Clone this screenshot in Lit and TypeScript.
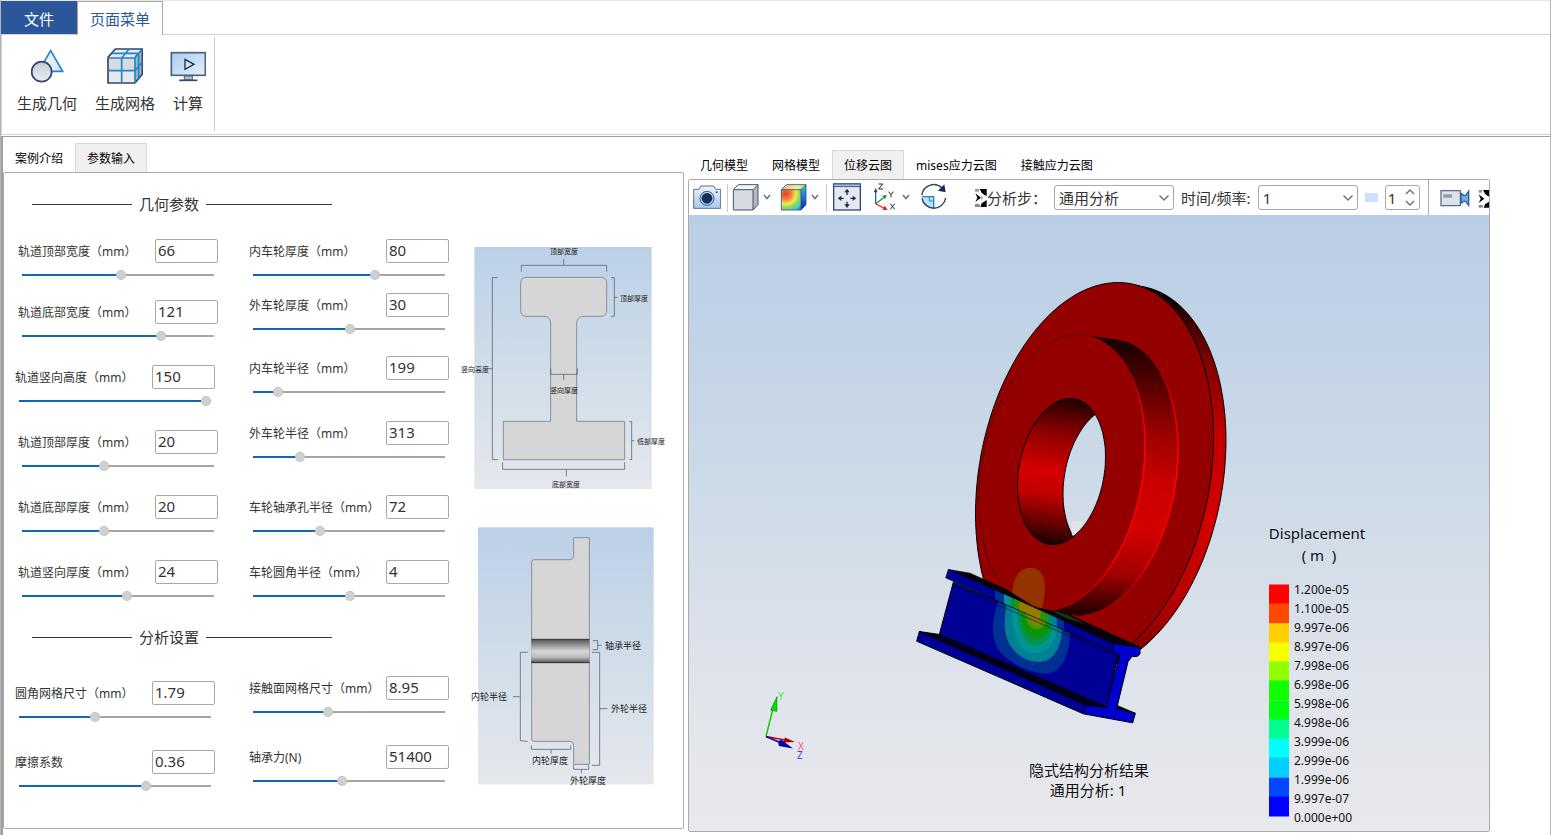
import { LitElement, html, svg, css } from "lit";
import { customElement, property, state } from "lit/decorators.js";
import { classMap } from "lit/directives/class-map.js";

interface Param {
  id: string;
  label: string;
  value: string;
  pos: number;
  outdent?: boolean;
}

const RAIL: Param[] = [
  { id: "rail-top-w", label: "轨道顶部宽度（mm）", value: "66", pos: 51.6 },
  { id: "rail-bottom-w", label: "轨道底部宽度（mm）", value: "121", pos: 73.6 },
  { id: "rail-height", label: "轨道竖向高度（mm）", value: "150", pos: 100, outdent: true },
  { id: "rail-top-t", label: "轨道顶部厚度（mm）", value: "20", pos: 42.3 },
  { id: "rail-bottom-t", label: "轨道底部厚度（mm）", value: "20", pos: 42.3 },
  { id: "rail-web-t", label: "轨道竖向厚度（mm）", value: "24", pos: 55 },
];
const WHEEL: Param[] = [
  { id: "inner-t", label: "内车轮厚度（mm）", value: "80", pos: 64.3 },
  { id: "outer-t", label: "外车轮厚度（mm）", value: "30", pos: 50.5 },
  { id: "inner-r", label: "内车轮半径（mm）", value: "199", pos: 11 },
  { id: "outer-r", label: "外车轮半径（mm）", value: "313", pos: 23.1 },
  { id: "bore-r", label: "车轮轴承孔半径（mm）", value: "72", pos: 34 },
  { id: "fillet-r", label: "车轮圆角半径（mm）", value: "4", pos: 50.5 },
];
const MESH: Param[] = [
  { id: "fillet-mesh", label: "圆角网格尺寸（mm）", value: "1.79", pos: 39, outdent: true },
  { id: "friction", label: "摩擦系数", value: "0.36", pos: 67, outdent: true },
];
const LOAD: Param[] = [
  { id: "contact-mesh", label: "接触面网格尺寸（mm）", value: "8.95", pos: 38.5 },
  { id: "bearing-force", label: "轴承力(N)", value: "51400", pos: 46.2 },
];

const LEGEND_COLORS = [
  "#ff0000", "#ff4800", "#ffd000", "#f8ff00", "#90ff00", "#12ff00",
  "#00ff12", "#00ff90", "#00ffff", "#00d0ff", "#0048ff", "#0000ff",
];
const LEGEND_LABELS = [
  "1.200e-05", "1.100e-05", "9.997e-06", "8.997e-06", "7.998e-06", "6.998e-06", "5.998e-06",
  "4.998e-06", "3.999e-06", "2.999e-06", "1.999e-06", "9.997e-07", "0.000e+00",
];

const fontStack = css`"Noto Sans", "Noto Sans CJK SC", sans-serif`;

/* Outline of a circle seen in the wheel's projection, from angle `from` to `to` in degrees. */
function ring(cx: number, cy: number, a: number, b: number, from = 0, to = 360): string {
  const skew = -0.1975;
  const depth = Math.sqrt(1 - skew * skew);
  const points: string[] = [];
  for (let d = from; d <= to; d += 3) {
    const t = (d * Math.PI) / 180;
    const x = cx + a * Math.cos(t);
    const y = cy + b * (skew * Math.cos(t) + depth * Math.sin(t));
    points.push(`${x.toFixed(1)} ${y.toFixed(1)}`);
  }
  return `M${points.join("L")}${to - from === 360 ? "Z" : ""}`;
}

/* Label, number box and slider of one parameter. */
@customElement("param-field")
export class ParamField extends LitElement {
  @property({ attribute: false }) param!: Param;
  @state() private pos: number | null = null;

  static styles = css`
    :host { display: block; }
    .field {
      display: grid;
      grid-template-columns: 137px 63px;
      grid-template-rows: 24px 12px;
      row-gap: 6px;
      align-items: center;
      font-family: ${fontStack};
      color: #333;
    }
    .label { padding-top: 2px; font-size: 12px; line-height: 22px; white-space: nowrap; }
    .box {
      box-sizing: border-box;
      width: 63px;
      height: 24px;
      padding: 0 2px 2px;
      border: 1px solid #a8a8a8;
      border-radius: 2px;
      background: #fff;
      font: 15px/20px ${fontStack};
      color: #333;
    }
    .slider {
      grid-column: 1 / -1;
      width: 192px;
      height: 12px;
      margin: 0 4px;
      appearance: none;
      background: transparent;
    }
    .slider::-webkit-slider-runnable-track {
      height: 2px;
      background: linear-gradient(to right, #0f67b7 var(--fill), #a6a6a6 var(--fill));
    }
    .slider::-webkit-slider-thumb {
      appearance: none;
      width: 10px;
      height: 10px;
      margin-top: -4px;
      border-radius: 50%;
      border: 1px dotted #b4b4b4;
      box-sizing: border-box;
      background: #d0d0d0;
    }
  `;

  render() {
    const p = this.param;
    const pos = this.pos ?? p.pos;
    return html`<div class="field">
      <label class="label" for=${p.id}>${p.label}</label>
      <input class="box" id=${p.id} type="text" .value=${p.value} />
      <input class="slider" type="range" min="0" max="100" step="any" aria-label=${p.label}
        style="--fill:${pos}%" .value=${String(pos)}
        @input=${(e: Event) => (this.pos = Number((e.target as HTMLInputElement).value))} />
    </div>`;
  }
}

/* Dimension sketches of rail and wheel sections. */
@customElement("section-sketches")
export class SectionSketches extends LitElement {
  static styles = css`
    :host { display: flex; flex-direction: column; gap: 15px; }
    .sketch { display: block; font-family: "Noto Sans CJK SC", sans-serif; fill: #222; overflow: visible; }
    .small { font-size: 7px; text-anchor: middle; }
    .large { font-size: 9px; text-anchor: middle; }
    .dim { fill: none; stroke: #5b6670; stroke-width: 2.4; }
    .body { fill: #d6d6d6; stroke: #8a9097; stroke-width: 3; }
  `;

  render() {
    return html`
      <svg class="sketch" width="220" height="265" viewBox="0 0 220 265" role="img" aria-label="轨道截面">
        <defs><linearGradient id="g" x1="0" y1="0" x2="0" y2="1">
          <stop offset="0" stop-color="#bbd0e7" /><stop offset=".5" stop-color="#d0dde9" /><stop offset="1" stop-color="#e5e7ed" />
        </linearGradient></defs>
        <g transform="scale(.33333)">
          <rect x="58" y="36" width="532" height="726" fill="url(#g)" />
          <path class="body" d="M213 127H439Q455 129 455 145V226Q455 242 439 244H384Q366 246 365 264V559H509V674H145V559H287V264Q286 246 270 244H213Q197 242 197 226V145Q197 129 213 127Z" />
          <path class="dim" d="M199 110V91H455V110M326 91V72M468 128H478V244H468M478 187H488M128 128H112V674H128M112 401H100M287 400V418H367V400M326 418V436M523 560H530V674H523M530 617H537M143 682V703H509V682M334 703V724" />
        </g>
        <text class="small" x="109" y="19">顶部宽度</text>
        <text class="small" x="179" y="66">顶部厚度</text>
        <text class="small" x="20" y="137">竖向高度</text>
        <text class="small" x="109" y="158">竖向厚度</text>
        <text class="small" x="196" y="209">低部厚度</text>
        <text class="small" x="111" y="252">底部宽度</text>
      </svg>
      <svg class="sketch" width="220" height="275" viewBox="0 0 220 275" role="img" aria-label="车轮截面">
        <defs>
          <linearGradient id="h" x1="0" y1="0" x2="0" y2="1">
            <stop offset="0" stop-color="#bbd0e7" /><stop offset=".5" stop-color="#d0dde9" /><stop offset="1" stop-color="#e5e7ed" />
          </linearGradient>
          <linearGradient id="b" x1="0" y1="0" x2="0" y2="1">
            <stop offset="0" stop-color="#555" /><stop offset=".5" stop-color="#d6d6d6" /><stop offset=".75" stop-color="#bdbdbd" /><stop offset="1" stop-color="#4c4c4c" />
          </linearGradient>
        </defs>
        <g transform="scale(.33333)">
          <rect x="69" y="37" width="527" height="771" fill="url(#h)" />
          <path class="body" d="M356 68H403V748H356V690Q355 680 345 679H236Q230 679 230 673V141Q230 134 238 134H345Q355 133 356 124Z" />
          <rect x="229" y="373" width="174" height="71" fill="url(#b)" />
          <path d="M229 373H403M229 443H403" stroke="#333" stroke-width="3" />
          <path class="dim" d="M413 377H428V404H413M428 391H440M411 412H434V751H411M434 581H457M218 412H196V677L218 679M196 545H174M229 691V703H347V691M288 703V716M356 750V763H401V750M379 763V775" />
        </g>
        <text class="large" x="168" y="134">轴承半径</text>
        <text class="large" x="174" y="197">外轮半径</text>
        <text class="large" x="34" y="185">内轮半径</text>
        <text class="large" x="95" y="249">内轮厚度</text>
        <text class="large" x="133" y="269">外轮厚度</text>
      </svg>`;
  }
}

/* Displacement contour plot of the wheel on the rail. */
@customElement("result-scene")
export class ResultScene extends LitElement {
  static styles = css`
    :host {
      display: grid;
      min-height: 0;
      background: linear-gradient(#b9cde5, #d0dce8 50%, #dfe3eb 75%, #e8e9ec);
    }
    .scene { display: block; width: 100%; height: 100%; min-height: 0; font-family: ${fontStack}; fill: #111; }
    .caption { font-size: 15px; text-anchor: middle; }
    .tick { font-size: 12px; }
    .axis { font-size: 10px; }
    .edge { stroke: #000; stroke-width: 1; }
  `;

  render() {
    return html`<svg class="scene" viewBox="689 215 800 615" role="img" aria-label="位移云图">
      <defs>
        <linearGradient id="sky" gradientUnits="userSpaceOnUse" x1="0" y1="215" x2="0" y2="830">
          <stop offset="0" stop-color="#b9cde5" /><stop offset=".5" stop-color="#d0dce8" /><stop offset=".75" stop-color="#dfe3eb" /><stop offset="1" stop-color="#e8e9ec" />
        </linearGradient>
        <linearGradient id="rim" gradientUnits="userSpaceOnUse" x1="0" y1="284" x2="0" y2="660">
          <stop offset="0" stop-color="#000" /><stop offset=".06" stop-color="#200000" /><stop offset=".2" stop-color="#800000" /><stop offset=".4" stop-color="#c00000" /><stop offset=".62" stop-color="#d40000" /><stop offset=".85" stop-color="#b80000" /><stop offset="1" stop-color="#700000" />
        </linearGradient>
        <linearGradient id="hub" gradientUnits="userSpaceOnUse" x1="1110" y1="336" x2="1090" y2="614">
          <stop offset="0" stop-color="#100000" /><stop offset=".1" stop-color="#3c0000" /><stop offset=".3" stop-color="#900000" /><stop offset=".5" stop-color="#c80000" /><stop offset=".68" stop-color="#d40000" /><stop offset=".85" stop-color="#a00000" /><stop offset="1" stop-color="#200000" />
        </linearGradient>
        <linearGradient id="lit" gradientUnits="userSpaceOnUse" x1="0" y1="345" x2="0" y2="614">
          <stop offset="0" stop-color="#a00000" stop-opacity="0" /><stop offset=".2" stop-color="#d00000" /><stop offset=".4" stop-color="#f00" /><stop offset=".8" stop-color="#f00000" /><stop offset="1" stop-color="#a00000" stop-opacity=".6" />
        </linearGradient>
        <linearGradient id="bore" gradientUnits="userSpaceOnUse" x1="1064" y1="397" x2="1040" y2="546">
          <stop offset="0" stop-color="#200000" /><stop offset=".25" stop-color="#900000" /><stop offset=".5" stop-color="#d40000" /><stop offset=".65" stop-color="#c00000" /><stop offset=".85" stop-color="#600000" /><stop offset="1" stop-color="#080000" />
        </linearGradient>
        <clipPath id="boreClip"><path d=${ring(1061.5, 471, 44, 73)} /></clipPath>
        <clipPath id="webClip"><path d="M160 95L655 310L620 470L118 252Z" /></clipPath>
        <clipPath id="headClip"><path d="M137 82L145 57L160 62L642 280L637 303Z" /></clipPath>
      </defs>

      <path class="edge" d=${ring(1107, 478, 119, 193)} fill="url(#rim)" />
      <path d=${ring(1100.5, 476.5, 119, 193)} fill="url(#rim)" />
      <path class="edge" d=${ring(1094.5, 475, 119, 193)} fill="#940000" />
      <path d=${ring(1095, 477, 83, 138)} fill="url(#hub)" />
      <path d="M1085 334.5L1118 339.5L1072 614.5L1039 609.5Z" fill="url(#hub)" />
      <path d=${ring(1062, 472, 83, 138)} fill="#940000" />
      <path d=${ring(1062, 472, 83, 138, 111, 285)} fill="none" stroke="#2c0000" stroke-width=".8" stroke-dasharray="3 2" />
      <g fill="none" stroke="url(#lit)" stroke-width="1.6">
        <path d=${ring(1062, 472, 83, 138, -66, 99)} />
        <path d=${ring(1095, 477, 83, 138, -66, 99)} />
      </g>
      <path d=${ring(1061.5, 471, 44, 73)} fill="url(#bore)" />
      <g clip-path="url(#boreClip)">
        <path class="edge" d=${ring(1107, 479, 44, 73)} fill="url(#sky)" />
        <path d="M1071 521H1083V523L1076 533L1072 535Z" fill="#e3e4e6" />
      </g>
      <path class="edge" d=${ring(1061.5, 471, 44, 73)} fill="none" />

      <g transform="translate(900 550) scale(.33333)">
        <path d="M335 150C335 100 350 52 390 52C425 52 436 85 435 115C434 145 428 165 424 180Z" fill="#943200" />
        <path d="M145 57L210 68L320 118L400 168Q430 178 500 190L720 290L640 284Z" fill="#02020c" stroke="#000" stroke-width="2" />
        <path d="M450 178L500 192L560 222L500 204Z" fill="#123a10" />
        <path d="M160 95L655 310L620 470L118 252Z" fill="#000094" stroke="#000" stroke-width="3" />
        <g clip-path="url(#webClip)">
          <path d="M300 140C285 175 276 215 279 250C284 330 390 369 440 369C490 368 512 300 510 235Z" fill="#003094" />
          <path d="M322 150C314 190 312 230 318 252C330 310 385 338 425 334C465 330 488 280 486 228Z" fill="#008094" />
          <path d="M338 160C334 230 350 308 405 308C450 306 474 260 470 220Z" fill="#009494" />
          <path d="M352 160C350 230 368 285 408 285C442 283 462 250 458 216Z" fill="#009450" />
          <path d="M362 165C362 225 378 264 408 264C436 263 452 240 450 212Z" fill="#0a940a" />
          <path d="M372 170C376 212 388 236 410 236C428 235 440 222 440 208Z" fill="#529400" />
          <path d="M380 175C388 205 398 225 412 224C424 222 430 214 430 202Z" fill="#948000" />
        </g>
        <path d="M137 82L145 57L160 62L642 280L637 303Z" fill="#000094" stroke="#000" stroke-width="2" />
        <g clip-path="url(#headClip)">
          <path d="M285 105H314V180H285Z" fill="#003094" />
          <path d="M312 110H334V190H312Z" fill="#009494" />
          <path d="M332 120H347V200H332Z" fill="#00943c" />
          <path d="M345 125H360V205H345Z" fill="#2c9400" />
          <path d="M358 130H424V225H358Z" fill="#947c00" />
          <path d="M422 150H445V230H420Z" fill="#2c9400" />
          <path d="M442 170H456V235H442Z" fill="#00945a" />
          <path d="M454 170H472V240H454Z" fill="#008094" />
          <path d="M470 180H492V250H470Z" fill="#003094" />
        </g>
        <path d="M160 93L637 303" fill="none" stroke="#000" stroke-width="2" stroke-dasharray="7 4" />
        <path d="M162 106L655 320" stroke="#000030" stroke-width="4" opacity=".4" />
        <path d="M58 243L118 252L620 470L556 464Z" fill="#00001c" stroke="#000" stroke-width="3" />
        <path d="M50 272L58 243L557 463L550 490Z" fill="#000094" stroke="#000" stroke-width="3" />
        <path d="M650 464L706 488L650 478Z" fill="#00000c" stroke="#000" stroke-width="2" />
        <path d="M642 279L720 290V310L712 318H696L684 334L650 474L706 489L698 517L550 490L557 463L618 472L659 314L637 303Z" fill="#0000cc" stroke="#000" stroke-width="3" />
      </g>

      <path d="M766 736L773 708" stroke="#00d000" stroke-width="1.4" />
      <path d="M777 696L770.5 709.5L777 711Z" fill="#00e000" stroke="#007000" stroke-width=".5" />
      <path d="M766 736L785 739.5" stroke="#d00000" stroke-width="1.4" />
      <path d="M795 741.5L785 737L783 742Z" fill="#b00000" />
      <path d="M766 736L780 742" stroke="#0000b0" stroke-width="1.4" />
      <path d="M793 748L781 739Q777 741 779 745.5Z" fill="#0000b0" />
      <text class="axis" x="778" y="699" fill="#40f040">Y</text>
      <text class="axis" x="798" y="749" fill="#f06060">X</text>
      <text class="axis" x="797" y="758" fill="#4040f0">Z</text>

      <text class="caption" x="1089" y="775">隐式结构分析结果</text>
      <text class="caption" x="1088" y="795">通用分析: 1</text>

      <text class="caption" x="1317" y="538">Displacement</text>
      <text class="caption" x="1319" y="560" xml:space="preserve">( m  )</text>
      ${LEGEND_COLORS.map((c, i) => svg`<rect x="1269" y=${584 + Math.round(i * 19.25)} width="20" height="20" fill=${c}></rect>`)}
      ${LEGEND_LABELS.map((t, i) => svg`<text class="tick" x="1294" y=${593 + i * 19}>${t}</text>`)}
    </svg>`;
  }
}

const chevron = html`<svg class="chevron" width="8" height="8" viewBox="0 0 8 8" aria-hidden="true">
  <path d="M1 2L4 5.500L7 2" fill="none" stroke="#5f7580" stroke-width="1.500" />
</svg>`;

@customElement("view-toolbar")
export class ViewToolbar extends LitElement {
  static styles = css`
    :host {
      display: flex;
      align-items: center;
      box-sizing: border-box;
      height: 35px;
      overflow: hidden;
      background: #fff;
      font: 15px/22px ${fontStack};
      color: #333;
    }
    .group { display: flex; align-items: center; flex: none; height: 28px; }
    .capture { padding: 0 6px 0 4px; }
    .shade { gap: 9px; padding: 0 7px 0 4px; border-left: 1px solid #ccc; }
    .camera { gap: 10px; padding-left: 6px; border-left: 1px solid #ccc; }
    .steps { gap: 7px; padding: 0 8px 0 27px; }
    .record { gap: 8px; height: 35px; padding-left: 11px; border-left: 1px solid #aaa; }
    .tool { display: flex; align-items: center; gap: 3px; padding: 0 0 1px; border: 0; background: none; }
    .icon, .chevron { display: block; flex: none; }
    .caption { display: flex; align-items: center; white-space: nowrap; }
    .picker { display: grid; align-items: center; }
    .picker > * { grid-area: 1 / 1; }
    .picker .arrow { justify-self: end; margin-right: 4px; pointer-events: none; }
    .select {
      box-sizing: border-box;
      height: 25px;
      padding: 0 4px;
      border: 1px solid #a8a8a8;
      border-radius: 3px;
      background: #fff;
      appearance: none;
      font: 15px/22px ${fontStack};
      color: #333;
    }
    .step { width: 120px; }
    .time { width: 100px; }
    .swatch { width: 13px; height: 9px; background: #cce0ff; }
    .spin {
      box-sizing: border-box;
      display: grid;
      grid-template: 1fr 1fr / 1fr 18px;
      width: 35px;
      height: 25px;
      border: 1px solid #a8a8a8;
      border-radius: 3px;
    }
    .count {
      grid-row: 1 / 3;
      min-width: 0;
      width: 100%;
      box-sizing: border-box;
      padding: 0 0 0 2px;
      border: 0;
      background: none;
      font: 15px/22px ${fontStack};
      color: #333;
    }
    .nudge { display: grid; place-items: center; padding: 0; border: 0; background: none; }
  `;

  private arrow = html`<svg class="arrow" width="12" height="8" viewBox="0 0 12 8" aria-hidden="true">
    <path d="M1.500 1.500L6 6L10.500 1.500" fill="none" stroke="#5f7580" stroke-width="1.400" /></svg>`;

  render() {
    return html`
      <div class="group capture">
        <button class="tool" aria-label="截图">
          <svg class="icon" width="28" height="28" viewBox="24 114 84 84">
            <defs><linearGradient id="c" x1="0" y1="0" x2="0" y2="1"><stop stop-color="#eef4fa" /><stop offset="1" stop-color="#a9c8e8" /></linearGradient></defs>
            <path d="M26 133H42L48 123H86L92 133H107V190H26Z" fill="url(#c)" stroke="#5a6f92" stroke-width="3" />
            <circle cx="66" cy="160" r="21" fill="#b9cfe6" stroke="#3d5a86" stroke-width="3" />
            <circle cx="66" cy="160" r="16" fill="#172e5c" />
            <rect x="92" y="139" width="6" height="5" fill="#3d5a86" />
          </svg>
        </button>
      </div>
      <div class="group shade">
        <button class="tool" aria-label="显示模式">
          <svg class="icon" width="28" height="28" viewBox="141 114 84 84">
            <path d="M145 134L160 119H219V179L204 195H145Z" fill="#f4f6f8" />
            <path d="M204 134L219 119V179L204 195Z" fill="#b2b8c2" />
            <path d="M145 134H204V195H145Z" fill="#d5d9e0" />
            <path d="M145 134L160 119H219V179L204 195H145ZM145 134H204V195M204 134L219 119" fill="none" stroke="#44536c" stroke-width="3" />
          </svg>${chevron}
        </button>
        <button class="tool" aria-label="云图">
          <svg class="icon" width="28" height="28" viewBox="285 114 84 84">
            <defs>
              <radialGradient id="r" gradientUnits="userSpaceOnUse" cx="302" cy="146" r="62">
                <stop stop-color="#e83a30" /><stop offset=".28" stop-color="#f08040" /><stop offset=".5" stop-color="#f4e84c" /><stop offset=".7" stop-color="#7fdc60" /><stop offset=".88" stop-color="#40c8e8" /><stop offset="1" stop-color="#3080e0" />
              </radialGradient>
              <linearGradient id="s" x1="0" y1="0" x2="0" y2="1"><stop stop-color="#48c8a0" /><stop offset=".4" stop-color="#2b7fe0" /><stop offset="1" stop-color="#1020b0" /></linearGradient>
              <linearGradient id="t"><stop stop-color="#f4b060" /><stop offset=".6" stop-color="#f4f0a0" /><stop offset="1" stop-color="#a0e8a0" /></linearGradient>
            </defs>
            <path d="M289 134L304 119H363L348 134Z" fill="url(#t)" />
            <path d="M348 134L363 119V179L348 195Z" fill="url(#s)" />
            <path d="M289 134H348V195H289Z" fill="url(#r)" />
            <path d="M289 134L304 119H363V179L348 195H289ZM289 134H348L363 119M348 134V195" fill="none" stroke="#33506c" stroke-width="2.500" />
          </svg>${chevron}
        </button>
      </div>
      <div class="group camera">
        <button class="tool" aria-label="适应窗口">
          <svg class="icon" width="28" height="28" viewBox="444 114 84 84">
            <rect x="446" y="117" width="80" height="78" fill="#e6eaf0" stroke="#2d4775" stroke-width="4" />
            <rect x="446" y="117" width="80" height="8" fill="#a8bddb" stroke="#2d4775" stroke-width="2.500" />
            <path d="M486 138V150M486 170V182M464 160H476M496 160H508" stroke="#172e5c" stroke-width="4" />
            <path d="M486 131L494 142H478ZM486 189L494 178H478ZM458 160L469 152V168ZM514 160L503 152V168Z" fill="#172e5c" />
          </svg>
        </button>
        <button class="tool" aria-label="视角">
          <svg class="icon" width="28" height="28" viewBox="558 114 84 84">
            <path d="M572 176V140" stroke="#2148a0" stroke-width="3.500" /><path d="M572 128L578 142H566Z" fill="#2148a0" />
            <path d="M572 176L596 158" stroke="#1c8a3c" stroke-width="3.500" /><path d="M606 150L600 163L591 152Z" fill="#1c8a3c" />
            <path d="M572 176L596 189" stroke="#d82020" stroke-width="3.500" /><path d="M608 195L592 194L599 182Z" fill="#e02020" />
            <path d="M581 117H593L581 132H594M611 140L618 149L625 140M618 149V157M616 176L629 193M629 176L616 193" fill="none" stroke="#222" stroke-width="3" />
          </svg>${chevron}
        </button>
        <button class="tool" aria-label="旋转">
          <svg class="icon" width="28" height="28" viewBox="702 114 84 84">
            <path d="M708 155H743V191A35 35 0 0 1 708 155Z" fill="#bfe2f6" />
            <path d="M730 155V168H743" fill="none" stroke="#1c86c8" stroke-width="3" />
            <path d="M708 155H743V191" fill="none" stroke="#1c86c8" stroke-width="4" />
            <path d="M707.500 150A36 36 0 0 1 768 129M779 159A36 36 0 0 1 708 160" fill="none" stroke="#2d4775" stroke-width="4.500" />
            <path d="M775 118L779 142L756 137Z" fill="#172e5c" />
          </svg>
        </button>
      </div>
      <div class="group steps">
        <label class="caption" for="step">
          <svg class="icon" width="12" height="20" viewBox="866 126 36 60" aria-hidden="true">
            <rect x="866" y="129" width="12" height="8" fill="#999" />
            <rect x="866" y="174" width="14" height="9" fill="#888" />
            <path d="M880 129H901V150L893 146L886 140Z" fill="#000" />
            <path d="M901 162V183H882L886 172Z" fill="#000" />
            <path d="M867 142L884 155L867 168L873 155Z" fill="#000" />
            <path d="M884 148L892 155L884 165Z" fill="#bbb" />
          </svg>分析步：</label>
        <div class="picker"><select class="select step" id="step"><option>通用分析</option></select>${this.arrow}</div>
        <label class="caption" for="time">时间/频率:</label>
        <div class="picker"><select class="select time" id="time"><option>1</option></select>${this.arrow}</div>
        <span class="swatch"></span>
        <div class="spin">
          <input class="count" type="text" value="1" aria-label="帧" />
          <button class="nudge" aria-label="增加"><svg width="10" height="6" viewBox="0 0 10 6"><path d="M1 5L5 1L9 5" fill="none" stroke="#5f7580" stroke-width="1.400" /></svg></button>
          <button class="nudge" aria-label="减少"><svg width="10" height="6" viewBox="0 0 10 6"><path d="M1 1L5 5L9 1" fill="none" stroke="#5f7580" stroke-width="1.400" /></svg></button>
        </div>
      </div>
      <div class="group record">
        <button class="tool" aria-label="录制">
          <svg class="icon" width="30" height="28" viewBox="1197 159 90 84">
            <rect x="1200" y="182" width="58" height="45" fill="#dfe3e9" stroke="#4c6288" stroke-width="3.500" />
            <rect x="1207" y="193" width="26" height="10" fill="#8c96a8" />
            <path d="M1260 190L1268 196H1274L1283 184V226L1274 214H1268L1260 220Z" fill="#6fb0e0" stroke="#2d5a90" stroke-width="4" />
          </svg>
        </button>
        <svg class="icon" width="12" height="20" viewBox="1308 168 36 60" aria-hidden="true">
          <rect x="1310" y="174" width="10" height="8" fill="#999" />
          <rect x="1310" y="219" width="12" height="8" fill="#888" />
          <path d="M1323 174H1344V195L1336 191L1329 185Z" fill="#000" />
          <path d="M1344 207V227H1325L1329 217Z" fill="#000" />
          <path d="M1310 187L1327 200L1310 213L1316 200Z" fill="#000" />
        </svg>
      </div>`;
  }
}

@customElement("app-root")
export class AppRoot extends LitElement {
  @state() private leftTab = "参数输入";
  @state() private rightTab = "位移云图";

  static styles = css`
    :host { display: block; font-family: ${fontStack}; color: #333; }
    .shell {
      box-sizing: border-box;
      display: flex;
      flex-direction: column;
      min-height: 100vh;
      border: solid #b4b4b4;
      border-width: 0 1px;
      background: #fff;
    }
    .ribbon-tabs {
      display: flex;
      height: 34px;
      border-top: 1px solid #e6e6e6;
      box-sizing: border-box;
    }
    .file, .page-tab { font: 15px/32px ${fontStack}; }
    .file { width: 76px; padding: 2px 0 0; border: 0; background: #2b579a; color: #fff; }
    .page-tab {
      width: 86px;
      height: 34px;
      padding: 0;
      border: 1px solid #a6a6a6;
      border-bottom: 0;
      background: #fff;
      color: #2b579a;
      z-index: 1;
    }
    .ribbon {
      display: flex;
      border: 1px solid #d2d2d2;
      border-right: 0;
      padding: 2px 0 3px;
    }
    .ribbon-group {
      display: flex;
      align-items: flex-start;
      gap: 12px;
      box-sizing: border-box;
      height: 94px;
      padding: 11px 8px 0 12px;
      border-right: 1px solid #ccc;
    }
    .action {
      display: flex;
      flex-direction: column;
      align-items: center;
      gap: 8px;
      padding: 0 3px;
      border: 0;
      background: none;
      font: 15px/22px ${fontStack};
      color: #333;
      white-space: nowrap;
    }
    .action.narrow { padding: 0; }
    .glyph { display: block; }
    .workspace {
      flex: 1;
      display: grid;
      grid-template-columns: minmax(0, 681fr) minmax(0, 802fr);
      gap: 4px;
      margin-top: 1px;
      padding: 6px 60px 3px 0;
      border: solid #a0a0a0;
      border-width: 1px 0 0 2px;
    }
    .pane { display: flex; flex-direction: column; min-width: 0; }
    .inputs { padding-bottom: 3px; }
    .results { padding-top: 7px; }
    .tabs { display: flex; height: 29px; }
    .tab {
      padding: 2px 11px 0;
      border: 1px solid transparent;
      border-bottom: 0;
      background: none;
      font: 12px/26px ${fontStack};
      color: #000;
      white-space: nowrap;
    }
    .tab.active { border-color: #d9d9d9; background: #f0f0f0; }
    .panel {
      flex: 1;
      min-height: 0;
      border: 1px solid #aaa;
      border-radius: 2px;
    }
    .form-panel { display: flex; }
    .form { flex: none; width: 451px; box-sizing: border-box; padding: 20px 0 0 14px; }
    .heading { display: flex; align-items: center; gap: 7px; margin: 0 0 24px 14px; font: 15px/22px ${fontStack}; }
    .heading::before, .heading::after { content: ""; height: 1px; background: #333; }
    .heading::before { width: 100px; }
    .heading::after { width: 126px; }
    .heading.second { margin-top: 24px; margin-bottom: 28px; }
    .columns { display: grid; grid-template-columns: 231px 200px; }
    .column { display: grid; align-content: start; }
    .rail { grid-template-rows: 61px 65px 65px 65px 65px 42px; }
    .wheel { grid-template-rows: 54px 63px 65px 74px 65px 42px; }
    .mesh, .load { grid-template-rows: 69px 42px; }
    .mesh { padding-top: 5px; }
    .outdent { margin-left: -3px; }
    .sketches { padding-top: 62px; }
    .view-panel { display: grid; grid-template-rows: auto minmax(0, 1fr); }
  `;

  private column(name: string, params: Param[]) {
    return html`<div class="column ${name}">
      ${params.map((p) => html`<param-field class=${classMap({ outdent: !!p.outdent })} .param=${p}></param-field>`)}
    </div>`;
  }

  private tabs(names: string[], active: string, pick: (n: string) => void) {
    return html`<div class="tabs" role="tablist">
      ${names.map((n) => html`<button role="tab" aria-selected=${n === active}
        class=${classMap({ tab: true, active: n === active })} @click=${() => pick(n)}>${n}</button>`)}
    </div>`;
  }

  render() {
    return html`<div class="shell">
      <nav class="ribbon-tabs">
        <button class="file">文件</button>
        <button class="page-tab">页面菜单</button>
      </nav>
      <div class="ribbon">
        <div class="ribbon-group">
          <button class="action">
            <svg class="glyph" width="36" height="36" viewBox="87 144 108 108" aria-hidden="true">
              <defs>
                <linearGradient id="tri" x1="0" y1="0" x2="1" y2="0"><stop stop-color="#fff" /><stop offset="1" stop-color="#cfe2f3" /></linearGradient>
                <linearGradient id="cir" x1="0" y1="0" x2="0" y2="1"><stop stop-color="#c6cbd4" /><stop offset="1" stop-color="#eceef1" /></linearGradient>
              </defs>
              <path d="M152 152L188 214H116Z" fill="url(#tri)" stroke="#1c86c8" stroke-width="5" />
              <circle cx="125" cy="215" r="30" fill="url(#cir)" stroke="#33456b" stroke-width="5" />
            </svg>
            生成几何
          </button>
          <button class="action">
            <svg class="glyph" width="36" height="36" viewBox="321 144 108 108" aria-hidden="true">
              <path d="M324 172L346 147H427V223L405 249H324Z" fill="#e8ebef" />
              <path d="M324 172H405V249H324Z" fill="#d6dae1" />
              <path d="M324 212H405V249H324Z" fill="#e6e9ed" />
              <path d="M405 172L427 147V223L405 249Z" fill="#a9b2c0" />
              <path d="M324 172L346 147H427V223L405 249H324Z" fill="none" stroke="#33456b" stroke-width="5" />
              <path d="M324 174H405M405 172V249M405 172L427 147M365 249V174L387 148M324 212H405L427 186M336 160H416V236" fill="none" stroke="#1c86c8" stroke-width="5" />
            </svg>
            生成网格
          </button>
          <button class="action narrow">
            <svg class="glyph" width="36" height="36" viewBox="510 144 108 108" aria-hidden="true">
              <defs><linearGradient id="scr" x1="0" y1="0" x2="1" y2="1"><stop stop-color="#a9cbee" /><stop offset="1" stop-color="#e6f1fb" /></linearGradient></defs>
              <rect x="514" y="158" width="102" height="68" fill="url(#scr)" stroke="#4d6185" stroke-width="5" />
              <path d="M555 178L582 193L555 208Z" fill="#d6e6f6" stroke="#1d2f5a" stroke-width="4" />
              <path d="M553 228H577V240H553Z" fill="#b4bccb" stroke="#4d6185" stroke-width="3" />
              <path d="M538 241H592" stroke="#33456b" stroke-width="5" />
            </svg>
            计算
          </button>
        </div>
      </div>
      <main class="workspace">
        <section class="pane inputs">
          ${this.tabs(["案例介绍", "参数输入"], this.leftTab, (n) => (this.leftTab = n))}
          <div class="panel form-panel">
            <form class="form">
              <h2 class="heading">几何参数</h2>
              <div class="columns">${this.column("rail", RAIL)}${this.column("wheel", WHEEL)}</div>
              <h2 class="heading second">分析设置</h2>
              <div class="columns">${this.column("mesh", MESH)}${this.column("load", LOAD)}</div>
            </form>
            <section-sketches class="sketches"></section-sketches>
          </div>
        </section>
        <section class="pane results">
          ${this.tabs(["几何模型", "网格模型", "位移云图", "mises应力云图", "接触应力云图"], this.rightTab, (n) => (this.rightTab = n))}
          <div class="panel view-panel">
            <view-toolbar></view-toolbar>
            <result-scene></result-scene>
          </div>
        </section>
      </main>
    </div>`;
  }
}
